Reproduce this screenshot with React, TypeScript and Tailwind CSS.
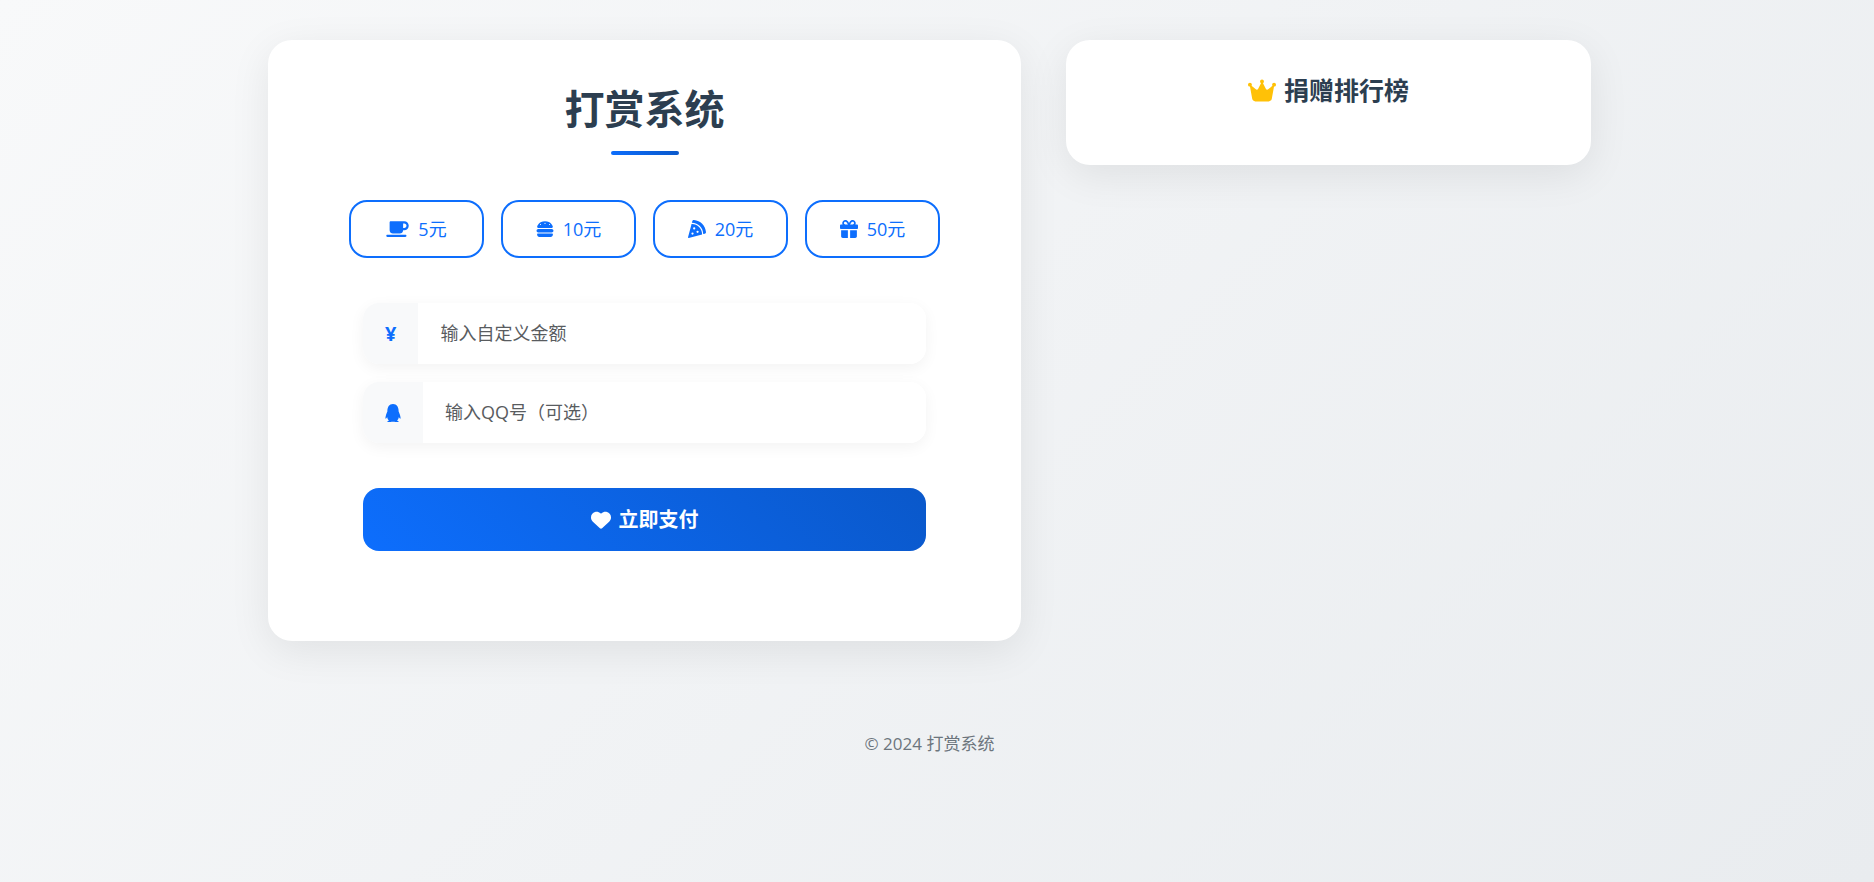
import { useState } from 'react';
import {
  FaBurger,
  FaCrown,
  FaGift,
  FaHeart,
  FaMugSaucer,
  FaPizzaSlice,
  FaQq,
} from 'react-icons/fa6';

const presets = [
  { amount: 5, icon: FaMugSaucer, size: 'h-[18px] w-[23px]' },
  { amount: 10, icon: FaBurger, size: 'h-[18px] w-[18px]' },
  { amount: 20, icon: FaPizzaSlice, size: 'h-[18px] w-[18px]' },
  { amount: 50, icon: FaGift, size: 'h-[18px] w-[18px]' },
];

const card = 'bg-white rounded-3xl shadow-[0_10px_40px_rgba(0,0,0,0.08)]';
const field = 'flex overflow-hidden rounded-2xl shadow-[0_4px_15px_rgba(0,0,0,0.05)]';
const prefix = 'flex items-center bg-[#f8f9fa] px-[22px] text-xl font-bold text-[#0d6efd]';
const input =
  'h-[61px] min-w-0 flex-1 bg-white px-[22px] pb-0.5 text-lg text-[#212529] outline-none placeholder:text-[#595c5f]';

export default function App() {
  const [amount, setAmount] = useState('');
  const [qq, setQq] = useState('');

  return (
    <div className="min-h-screen bg-linear-135 from-[#f8f9fa] to-[#e9ecef] pr-[15px] font-['Open_Sans','Noto_Sans_CJK_SC',sans-serif] text-[#212529]">
      <div className="mx-auto max-w-[1323px] pt-10">
        <main className="grid grid-cols-12 items-start gap-[45px]">
          {/* Payment form */}
          <section className={`${card} col-span-7 px-20 pt-10 pb-[90px]`}>
            <h1 className="text-center text-[40px] leading-[58px] font-bold text-[#2c3e50]">打赏系统</h1>
            <div className="mx-auto mt-[13px] h-1 w-[68px] rounded-full bg-linear-45 from-[#0d6efd] to-[#0a58ca]" />

            <div className="mt-[45px] flex justify-center gap-[17px]">
              {presets.map(({ amount: value, icon: Icon, size }) => (
                <button
                  key={value}
                  type="button"
                  onClick={() => setAmount(String(value))}
                  className="flex h-[58px] w-[135px] items-center justify-center gap-[9px] rounded-[18px] border-2 border-[#0d6efd] text-lg text-[#0d6efd]"
                >
                  <Icon className={size} />
                  <span>{value}元</span>
                </button>
              ))}
            </div>

            <form className="mx-auto max-w-[563px]" onSubmit={(e) => e.preventDefault()}>
              <div className={`${field} mt-[45px]`}>
                <label htmlFor="amount" className={prefix} aria-label="金额">
                  ¥
                </label>
                <input
                  id="amount"
                  inputMode="decimal"
                  value={amount}
                  onChange={(e) => setAmount(e.target.value)}
                  placeholder="输入自定义金额"
                  className={input}
                />
              </div>
              <div className={`${field} mt-[18px]`}>
                <label htmlFor="qq" className={prefix} aria-label="QQ号">
                  <FaQq className="h-[18px] w-4" />
                </label>
                <input
                  id="qq"
                  value={qq}
                  onChange={(e) => setQq(e.target.value)}
                  placeholder="输入QQ号（可选）"
                  className={input}
                />
              </div>
              <button
                type="submit"
                className="mt-[45px] flex h-[63px] w-full items-center justify-center gap-2 rounded-2xl bg-linear-45 from-[#0d6efd] to-[#0a58ca] text-xl font-bold text-white"
              >
                <FaHeart />
                <span>立即支付</span>
              </button>
            </form>
          </section>

          {/* Leaderboard */}
          <section className={`${card} col-span-5 px-8 pt-[34px] pb-[59px]`}>
            <h2 className="flex items-center justify-center gap-2 text-[25px] leading-8 font-bold text-[#2c3e50]">
              <FaCrown className="h-[25px] w-[28px] text-[#ffc107]" />
              <span>捐赠排行榜</span>
            </h2>
          </section>
        </main>

        <footer className="mt-[90px] text-center text-[17px] leading-[26px] text-[#6c757d]">
          © 2024 打赏系统
        </footer>
      </div>
    </div>
  );
}
